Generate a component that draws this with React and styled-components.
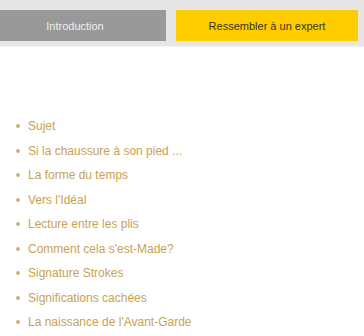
import React from "react";
import styled, { createGlobalStyle } from "styled-components";

const Global = createGlobalStyle`
  html, body { margin: 0; padding: 0; background: #fff; overflow: hidden; }
  body { font-family: "Liberation Sans", Arial, sans-serif; }
`;

const Band = styled.div`
  background: #e6e6e6;
  border-bottom: 1px solid #f2f2f2;
  height: 47px;
  box-sizing: border-box;
  padding-top: 10px;
  overflow: hidden;
`;

const Tabs = styled.div`
  display: flex;
  gap: 10px;
  margin-left: -16px;
`;

const Tab = styled.div`
  flex: 0 0 182px;
  height: 31px;
  display: flex;
  align-items: center;
  justify-content: center;
  font-size: 11px;
  background: ${(p) => (p.$active ? "#ffcc00" : "#999999")};
  color: ${(p) => (p.$active ? "#3a3320" : "#eeeeee")};
`;

const List = styled.ul`
  list-style: none;
  margin: 67px 0 0 0;
  padding: 0 0 0 16px;
`;

const Item = styled.li`
  height: 24.5px;
  display: flex;
  align-items: center;
  gap: 8px;
  font-size: 12px;
  color: #c7a252;
  &::before {
    content: "";
    width: 4px;
    height: 4px;
    border-radius: 50%;
    background: #cdb07a;
    flex: 0 0 4px;
  }
`;

const items = [
  "Sujet",
  "Si la chaussure à son pied ...",
  "La forme du temps",
  "Vers l'Idéal",
  "Lecture entre les plis",
  "Comment cela s'est-Made?",
  "Signature Strokes",
  "Significations cachées",
  "La naissance de l'Avant-Garde",
];

export default function App() {
  return (
    <>
      <Global />
      <Band>
        <Tabs>
          <Tab>Introduction</Tab>
          <Tab $active>Ressembler à un expert</Tab>
        </Tabs>
      </Band>
      <List>
        {items.map((t) => (
          <Item key={t}>{t}</Item>
        ))}
      </List>
    </>
  );
}
